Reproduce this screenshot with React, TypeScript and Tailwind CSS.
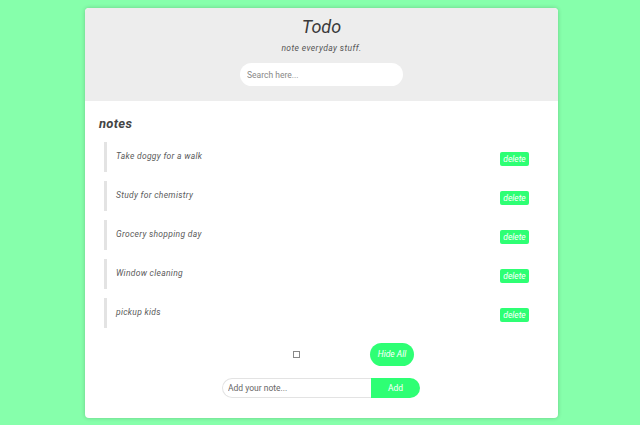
const notes = [
  'Take doggy for a walk',
  'Study for chemistry',
  'Grocery shopping day',
  'Window cleaning',
  'pickup kids',
];

export default function App() {
  return (
    <div className="min-h-[425px] bg-[#86ffab] pt-2 font-['Roboto',sans-serif]">
      <div className="ml-[85px] w-[473px] h-[410px] bg-white rounded-sm shadow-[0_0_4px_rgba(0,0,0,0.2)] overflow-hidden">
        <div className="bg-[#ededed] h-[93px] flex flex-col items-center pt-[8px]">
          <h1 className="text-[18px] leading-[22px] italic text-[#3a3a3a]">Todo</h1>
          <p className="mt-[4px] text-[8.5px] leading-[12px] italic text-[#555] tracking-[0.4px]">note everyday stuff.</p>
          <input
            className="mt-[9px] w-[163px] h-[23px] rounded-full bg-white px-[7px] text-[8.5px] outline-none placeholder:text-[#888]"
            placeholder="Search here..."
          />
        </div>
        <div className="px-[14px] pt-[15px]">
          <h2 className="text-[13px] leading-[16px] font-bold italic text-[#444] tracking-[0.3px]">notes</h2>
          <ul className="mt-[10px] flex flex-col gap-[9px] pl-[5px] pr-[15px]">
            {notes.map((n) => (
              <li key={n} className="h-[30px] border-l-[3px] border-[#e3e3e3] flex items-start justify-between">
                <span className="ml-[9px] mt-[9px] text-[8.5px] leading-[10px] italic text-[#5a5a5a] tracking-[0.3px]">{n}</span>
                <button className="mt-[10px] w-[29px] h-[14px] rounded-[2px] bg-[#2eff74] text-white text-[8.5px] italic leading-[14px]">delete</button>
              </li>
            ))}
          </ul>
          <div className="mt-[15px] flex items-center">
            <span className="ml-[194px] w-[7px] h-[7px] border border-[#888] bg-white" />
            <button className="ml-[70px] w-[44px] h-[23px] rounded-full bg-[#2eff74] text-white text-[8.5px] italic">Hide All</button>
          </div>
          <div className="mt-[12px] flex ml-[123px]">
            <input
              className="w-[149px] h-[20px] rounded-l-full border border-[#e3e3e3] border-r-0 px-[5px] text-[8.5px] outline-none placeholder:text-[#666]"
              placeholder="Add your note..."
            />
            <button className="w-[49px] h-[20px] rounded-r-full bg-[#2eff74] text-white text-[8.5px]">Add</button>
          </div>
        </div>
      </div>
    </div>
  );
}
